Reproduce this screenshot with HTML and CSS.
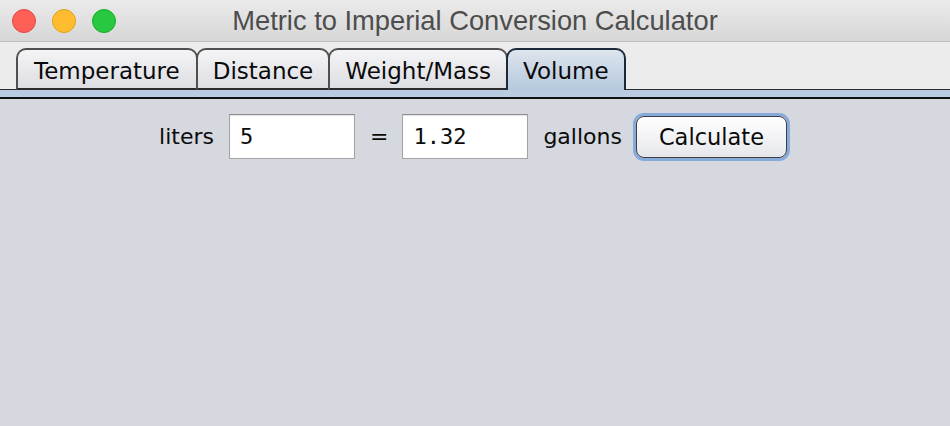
FILE: index.html
```html
<!DOCTYPE html>
<html>
<head>
<meta charset="utf-8">
<title>Metric to Imperial Conversion Calculator</title>
<link rel="stylesheet" href="styles.css">
</head>
<body>
<div class="window">
  <div class="titlebar">
    <div class="lights">
      <span class="light red"></span>
      <span class="light yellow"></span>
      <span class="light green"></span>
    </div>
    <div class="title">Metric to Imperial Conversion Calculator</div>
    <div></div>
  </div>
  <div class="tabstrip">
    <div class="tab">Temperature</div>
    <div class="tab">Distance</div>
    <div class="tab">Weight/Mass</div>
    <div class="tab selected">Volume</div>
  </div>
  <div class="tabband"></div>
  <div class="content">
    <div class="row">
      <span class="label">liters</span>
      <div class="field">5</div>
      <span class="label eq">=</span>
      <div class="field">1.32</div>
      <span class="label">gallons</span>
      <button class="btn">Calculate</button>
    </div>
  </div>
</div>
</body>
</html>
```
FILE: styles.css
```css
html, body {
  margin: 0;
  padding: 0;
  width: 950px;
  height: 426px;
  overflow: hidden;
  background: #d5d8df;
}
.window {
  display: flex;
  flex-direction: column;
  height: 426px;
  font-family: "DejaVu Sans", sans-serif;
}
.titlebar {
  height: 41px;
  border-bottom: 1px solid #bcbcbc;
  background: linear-gradient(#ebebeb, #d6d6d6);
  display: grid;
  grid-template-columns: 1fr auto 1fr;
  align-items: center;
}
.lights {
  display: flex;
  gap: 16px;
  padding-left: 12px;
}
.light {
  width: 22px;
  height: 22px;
  border-radius: 50%;
  display: block;
}
.red { background: #fe5f57; border: 1px solid #e2463f; }
.yellow { background: #febc2e; border: 1px solid #e1a116; }
.green { background: #28c840; border: 1px solid #14ae2b; }
.title {
  font-family: "Liberation Sans", Arial, sans-serif;
  font-size: 27.3px;
  color: #4d4d4d;
}
.tabstrip {
  height: 48px;
  background: #ececec;
  display: flex;
  align-items: flex-end;
  padding-left: 16px;
  box-shadow: inset 0 -1px 0 #2b2b2b;
}
.tab {
  height: 38px;
  padding: 0 15px;
  border: 2px solid #4f4f4f;
  border-bottom: 2px solid #2b2b2b;
  border-radius: 10px 10px 0 0;
  background: linear-gradient(#f5f5f7, #dcdde2);
  font-size: 23px;
  line-height: 42px;
  color: #0a0a0a;
  margin-left: -2px;
}
.tab:first-child { margin-left: 0; padding: 0 16px; }
.tab.selected {
  border-color: #1c2939;
  border-bottom: none;
  height: 40px;
  background: linear-gradient(#dde5ee, #b5c8dd);
}
.tabband {
  height: 7px;
  background: #b9cbe0;
  border-bottom: 2px solid #111;
}
.content {
  flex: 1;
  background: #d5d8df;
  padding-top: 15px;
}
.row {
  display: flex;
  justify-content: center;
  align-items: center;
}
.label {
  font-size: 22px;
  color: #0a0a0a;
}
.field {
  width: 114px;
  height: 43px;
  border: 1px solid #a3a3a3;
  border-top-color: #8e8e8e;
  background: #fff;
  box-shadow: inset 0 1px 1px rgba(0,0,0,0.12);
  font-family: "DejaVu Sans Mono", monospace;
  font-size: 22px;
  line-height: 43px;
  padding-left: 10px;
  margin-left: 15px;
  color: #0a0a0a;
}
.eq { margin-left: 14px; }
.eq + .field { margin-left: 14px; }
.field + .label { margin-left: 15px; }
.btn {
  margin-left: 14px;
  margin-right: 4px;
  width: 151px;
  height: 42px;
  border: 1px solid #3e3e3e;
  border-radius: 8px;
  background: linear-gradient(#ffffff, #e6e7eb);
  box-shadow: 0 0 0 3px #86abdb;
  font-family: "DejaVu Sans", sans-serif;
  font-size: 22.5px;
  color: #0a0a0a;
  padding: 0;
}
```
